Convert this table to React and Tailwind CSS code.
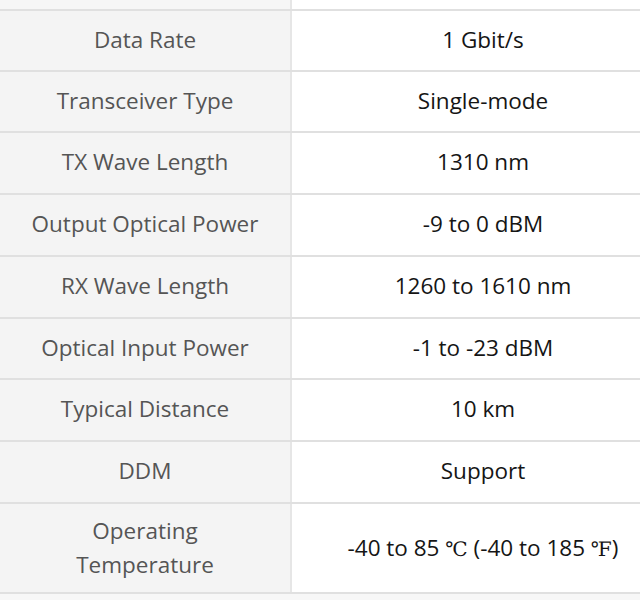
const specs = [
  { label: "Data Rate", value: "1 Gbit/s", h: "h-[61px]" },
  { label: "Transceiver Type", value: "Single-mode", h: "h-[61px]" },
  { label: "TX Wave Length", value: "1310 nm", h: "h-[62px]" },
  { label: "Output Optical Power", value: "-9 to 0 dBM", h: "h-[62px]" },
  { label: "RX Wave Length", value: "1260 to 1610 nm", h: "h-[62px]" },
  { label: "Optical Input Power", value: "-1 to -23 dBM", h: "h-[61px]" },
  { label: "Typical Distance", value: "10 km", h: "h-[62px]" },
  { label: "DDM", value: "Support", h: "h-[62px]" },
];

function SpecRow({ label, value, h }) {
  return (
    <div className={`grid grid-cols-[292px_382px] border-t-2 border-[#e0e0e0] ${h}`}>
      <div className="flex items-center justify-center pb-[2px] bg-[#f4f4f4] border-r-2 border-[#e6e6e6] text-[#555]">
        {label}
      </div>
      <div className="flex items-center justify-center pb-[2px] bg-white text-[#151515]">{value}</div>
    </div>
  );
}

export default function App() {
  return (
    <div className="w-[640px] h-[600px] bg-white overflow-hidden font-['Open_Sans','Noto_Sans',sans-serif] text-[22.5px]">
      <div className="w-[674px]">
        <div className="grid grid-cols-[292px_382px] h-[9px]">
          <div className="bg-[#f6f6f6] border-r-2 border-[#e6e6e6]" />
          <div className="bg-white" />
        </div>
        {specs.map((s) => (
          <SpecRow key={s.label} {...s} />
        ))}
        <div className="grid grid-cols-[292px_382px] h-[92px] border-y-2 border-[#e0e0e0]">
          <div className="flex flex-col items-center justify-center bg-[#f4f4f4] border-r-2 border-[#e6e6e6] text-[#555] leading-[34px]">
            <span>Operating</span>
            <span>Temperature</span>
          </div>
          <div className="flex items-center justify-center bg-white text-[#151515]">
            <span>
              -40 to 85 <span className="font-['DejaVu_Serif',serif] text-[20px]">℃</span> (-40 to 185{" "}
              <span className="font-['DejaVu_Serif',serif] text-[20px]">℉</span>)
            </span>
          </div>
        </div>
        <div className="h-[8px] bg-[#f7f7f7]" />
      </div>
    </div>
  );
}
